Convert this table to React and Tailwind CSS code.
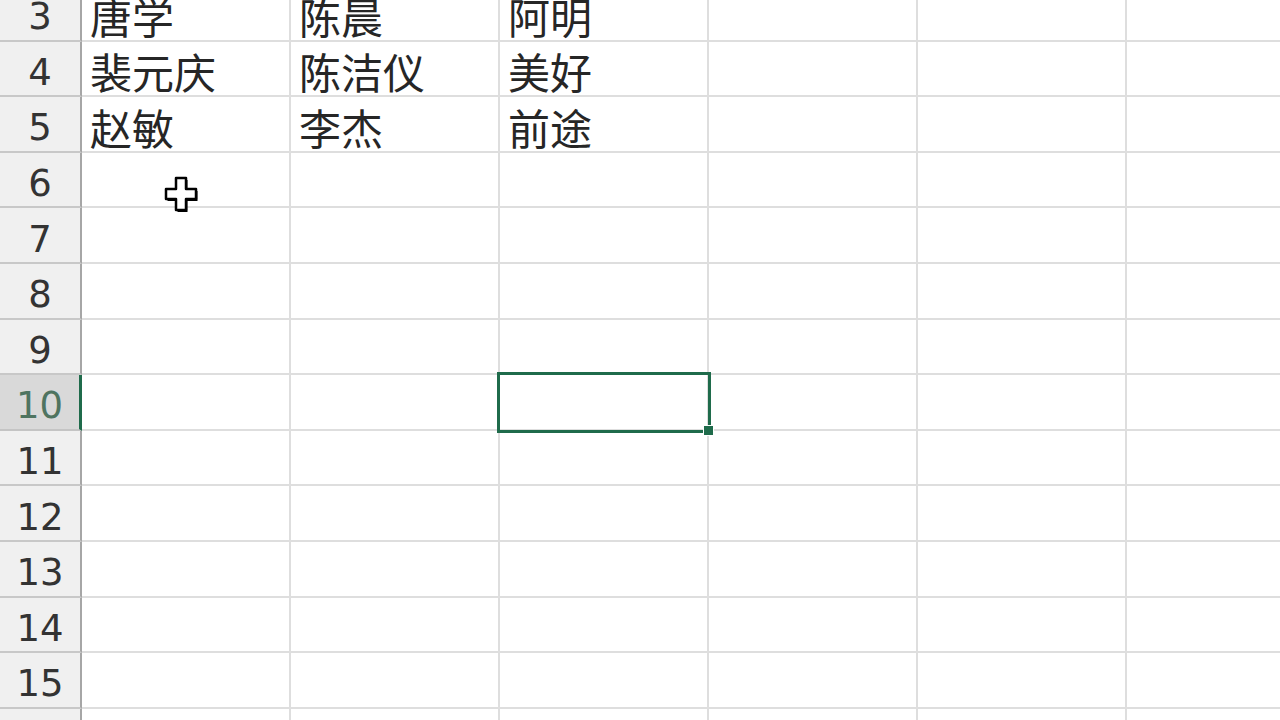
import React from "react";

const rows = [
  { n: 3, a: "唐学", b: "陈晨", c: "阿明" },
  { n: 4, a: "裴元庆", b: "陈洁仪", c: "美好" },
  { n: 5, a: "赵敏", b: "李杰", c: "前途" },
  { n: 6 }, { n: 7 }, { n: 8 }, { n: 9 }, { n: 10, sel: true },
  { n: 11 }, { n: 12 }, { n: 13 }, { n: 14 }, { n: 15 }, { n: 16 },
];

const cjk = { fontFamily: '"Noto Sans CJK SC", "Noto Sans", sans-serif' };
const num = { fontFamily: '"DejaVu Sans", "Liberation Sans", sans-serif' };

function Cell({ text, selected }) {
  return (
    <div className="relative w-[209px] shrink-0 h-full border-r-2 border-b-2 border-[#dedede] flex items-center pl-[8px]">
      <span className="text-[42px] leading-none text-[#262626] translate-y-[3px]" style={cjk}>{text}</span>
      {selected && (
        <div className="absolute -left-[3px] -top-[3px] w-[214px] h-[61px] border-[3px] border-[#1f6b4b] z-10">
          <div className="absolute -right-[6px] -bottom-[6px] w-[11px] h-[11px] bg-[#1f6b4b] border border-white" />
        </div>
      )}
    </div>
  );
}

export default function App() {
  return (
    <div className="relative w-[1280px] h-[720px] overflow-hidden bg-white">
      <div className="flex flex-col -mt-[14px]">
        {rows.map((r) => (
          <div key={r.n} className="flex h-[55.6px] shrink-0">
            <div
              className={
                r.sel
                  ? "w-[82px] shrink-0 h-full flex items-center justify-center bg-[#d9d9d9] border-b-2 border-[#c4c4c4] border-r-[3px] border-r-[#1f6b4b] text-[#4f7460]"
                  : "w-[82px] shrink-0 h-full flex items-center justify-center bg-[#f0f0f0] border-b-2 border-[#c8c8c8] border-r-2 border-r-[#a6a6a6] text-[#333333]"
              }
            >
              <span className="text-[37px] leading-none translate-y-[4px]" style={num}>{r.n}</span>
            </div>
            <Cell text={r.a} />
            <Cell text={r.b} />
            <Cell text={r.c} selected={r.sel} />
            <Cell />
            <Cell />
            <Cell />
          </div>
        ))}
      </div>
      <svg className="absolute left-[163px] top-[175px]" width="36" height="38" viewBox="0 0 36 38">
        <path d="M13 3 H23 V14 H33 V24 H23 V35 H13 V24 H3 V14 H13 Z" fill="#000" transform="translate(1.5,2)" />
        <path d="M13 3 H23 V14 H33 V24 H23 V35 H13 V24 H3 V14 H13 Z" fill="#fff" stroke="#000" strokeWidth="2.5" strokeLinejoin="round" />
      </svg>
    </div>
  );
}
